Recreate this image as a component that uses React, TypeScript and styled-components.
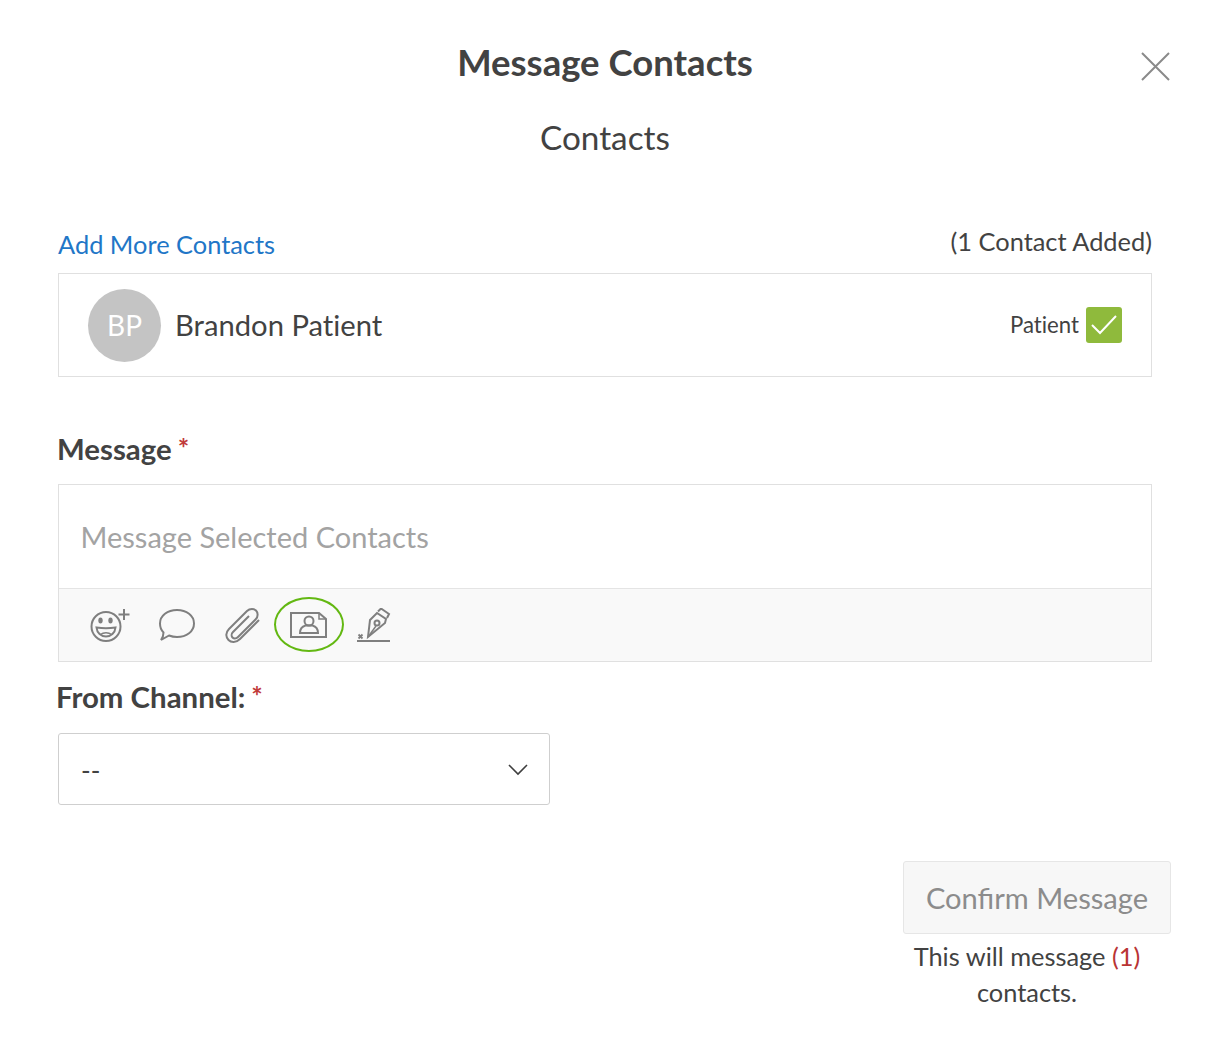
import styled, { createGlobalStyle } from "styled-components";

const GlobalStyle = createGlobalStyle`
  html, body {
    margin: 0;
    padding: 0;
    background: #fff;
  }
  body {
    font-family: Lato, "Open Sans", sans-serif;
    color: #424242;
  }
`;

const Modal = styled.div`
  position: relative;
  box-sizing: border-box;
  width: 1206px;
  height: 1052px;
  padding: 40px 54px 0 58px;
`;

const CloseButton = styled.button`
  position: absolute;
  top: 51px;
  left: 1140px;
  width: 31px;
  height: 31px;
  padding: 0;
  border: 0;
  background: none;
`;

const Title = styled.h1`
  margin: 0;
  font-size: 36.5px;
  line-height: 44px;
  font-weight: 700;
  text-align: center;
`;

const SubTitle = styled.h2`
  margin: 33px 0 0;
  font-size: 33.3px;
  line-height: 40px;
  font-weight: 400;
  text-align: center;
`;

const ContactsHead = styled.div`
  display: flex;
  justify-content: space-between;
  align-items: flex-start;
  margin-top: 69px;
  height: 47px;
`;

const AddLink = styled.a`
  font-size: 25.4px;
  line-height: 36px;
  color: #2176c7;
`;

const AddedCount = styled.span`
  font-size: 25.4px;
  line-height: 30px;
`;

const ContactRow = styled.div`
  display: flex;
  align-items: center;
  box-sizing: border-box;
  height: 104px;
  padding: 0 29px;
  border: 1px solid #e0e0e0;
`;

const Avatar = styled.div`
  display: flex;
  align-items: center;
  justify-content: center;
  width: 73px;
  height: 73px;
  border-radius: 50%;
  background: #c4c4c4;
  color: #fff;
  font-size: 28px;
`;

const ContactName = styled.span`
  margin-left: 14px;
  padding-bottom: 2px;
  font-size: 29.2px;
  font-variant-ligatures: none;
  flex: 1;
`;

const RoleLabel = styled.span`
  font-size: 22.2px;
  padding-bottom: 2px;
  font-variant-ligatures: none;
  margin-right: 7px;
`;

const CheckBox = styled.span`
  display: flex;
  align-items: center;
  justify-content: center;
  width: 36px;
  height: 36px;
  border-radius: 3px;
  background: #8fba3c;
`;

const FieldLabel = styled.label<{ $shift: number }>`
  display: block;
  font-size: 29.4px;
  line-height: 36px;
  font-weight: 700;
  margin-left: ${(p) => p.$shift}px;
`;

const Required = styled.span`
  color: #c13a3a;
  font-weight: 700;
  font-size: 27px;
  margin-left: 6px;
  vertical-align: 2px;
`;

const MessageSection = styled.div`
  margin-top: 53px;
`;

const MessageBox = styled.div`
  margin-top: 17px;
  border: 1px solid #e0e0e0;
`;

const MessageInput = styled.div`
  box-sizing: border-box;
  height: 103px;
  padding: 33px 22px 0 21.5px;
  font-size: 29px;
  line-height: 38px;
  color: #a3a3a3;
`;

const Toolbar = styled.div`
  display: flex;
  align-items: center;
  height: 72px;
  padding-left: 31px;
  background: #f9f9f9;
  border-top: 1px solid #e4e4e4;
`;

const ToolIcon = styled.svg<{ $gap?: number }>`
  display: block;
  flex: none;
  margin-left: ${(p) => p.$gap ?? 0}px;
  fill: none;
  stroke: #7f7f7f;
  stroke-width: 2;
`;

const HighlightRing = styled.span`
  display: flex;
  align-items: center;
  justify-content: center;
  flex: none;
  box-sizing: border-box;
  width: 70px;
  height: 55px;
  margin: -2px 0 0 13px;
  border: 2px solid #63b812;
  border-radius: 50%;
`;

const ChannelSection = styled.div`
  margin-top: 16px;
`;

const SelectBox = styled.div`
  display: flex;
  align-items: center;
  justify-content: space-between;
  box-sizing: border-box;
  width: 492px;
  height: 72px;
  margin-top: 18px;
  padding: 2px 21px 0 22px;
  border: 1px solid #cfcfcf;
  border-radius: 3px;
  font-size: 26px;
`;

const ConfirmArea = styled.div`
  display: flex;
  flex-direction: column;
  align-items: center;
  width: 268px;
  margin: 56px -19px 0 auto;
`;

const ConfirmButton = styled.button`
  box-sizing: border-box;
  width: 268px;
  height: 73px;
  padding: 0;
  border: 1px solid #e6e6e6;
  border-radius: 3px;
  background: #f7f7f7;
  color: #8c8c8c;
  font-family: inherit;
  font-size: 29.1px;
`;

const ConfirmNote = styled.p`
  margin: 4px 0 0 -20px;
  width: 260px;
  font-size: 25.4px;
  line-height: 36px;
  text-align: center;
`;

const Count = styled.span`
  color: #b93434;
`;

export default function App() {
  return (
    <Modal>
      <GlobalStyle />
      <CloseButton aria-label="Close">
        <svg width="31" height="31" viewBox="0 0 31 31" fill="none" stroke="#8a8a8a" strokeWidth="2">
          <path d="M2 2l27 27M29 2L2 29" />
        </svg>
      </CloseButton>

      <Title>Message Contacts</Title>
      <SubTitle>Contacts</SubTitle>

      <ContactsHead>
        <AddLink>Add More Contacts</AddLink>
        <AddedCount>(1 Contact Added)</AddedCount>
      </ContactsHead>

      <ContactRow>
        <Avatar>BP</Avatar>
        <ContactName>Brandon Patient</ContactName>
        <RoleLabel>Patient</RoleLabel>
        <CheckBox>
          <svg width="26" height="20" viewBox="0 0 26 20" fill="none" stroke="#fff" strokeWidth="2">
            <path d="M1 10l8 8L25 1" />
          </svg>
        </CheckBox>
      </ContactRow>

      <MessageSection>
        <FieldLabel $shift={-1}>
          Message<Required>*</Required>
        </FieldLabel>
        <MessageBox>
          <MessageInput>Message Selected Contacts</MessageInput>
          <Toolbar>
            {/* emoji */}
            <ToolIcon width="42" height="36" viewBox="0 0 42 36">
              <circle cx="16" cy="19.500" r="14.500" />
              <ellipse cx="10.500" cy="13.500" rx="2.200" ry="3" fill="#7f7f7f" stroke="none" />
              <ellipse cx="20.500" cy="13.500" rx="2.200" ry="3" fill="#7f7f7f" stroke="none" />
              <path d="M6.500 20.500c6 1 13 1 19 0-.5 5.500-4.500 9-9.500 9s-9-3.500-9.500-9z" />
              <path d="M10.500 27.500c3-2.500 8-2.500 11 0" strokeWidth="1.500" />
              <path d="M34 2v11M28.500 7.500h11" />
            </ToolIcon>
            {/* speech bubble */}
            <ToolIcon $gap={26} width="38" height="35" viewBox="0 0 38 35">
              <path d="M19 2c9.500 0 17 5.500 17 13.500S28.500 29 19 29c-3 0-5.500-.5-8-1.500L3 32c1.500-2 2.500-4.500 2.500-7.500C3 22 2 19 2 15.500 2 7.500 9.500 2 19 2z" />
            </ToolIcon>
            {/* paperclip */}
            <ToolIcon $gap={29} width="36" height="36" viewBox="0 0 36 36">
              <path d="M34 13L15 32c-4 4-9 3.500-11.500 1S0 26 4 22L22 4c3-3 7-2.500 9-.5s2.500 6-.5 9L13 30c-2 2-4.500 1.500-5.500.5s-1.500-3.500.5-5.500L24 9" />
            </ToolIcon>
            <HighlightRing>
              <ToolIcon $gap={-1} width="37" height="27" viewBox="0 0 37 27">
                <path d="M1 2h28l7 6v18H1z" />
                <path d="M29 2v6h7" strokeWidth="1.500" />
                <circle cx="19" cy="10" r="4.500" />
                <path d="M10 22c0-4 2-6.500 5.500-7.500h7c3.500 1 5.500 3.500 5.500 7.500z" />
              </ToolIcon>
            </HighlightRing>
            {/* signature pen */}
            <ToolIcon $gap={12} width="35" height="35" viewBox="0 0 35 35">
              <path d="M1 33h33" />
              <path d="M12 29l2-17 7-7 9 6-1 4z" />
              <path d="M22 3.500l3-3 8 5.500-2 4" />
              <path d="M12 29l8-11" strokeWidth="1.500" />
              <circle cx="21" cy="15" r="2.500" />
              <path d="M2.500 26.500l4 4M6.500 26.500l-4 4" strokeWidth="1.800" />
            </ToolIcon>
          </Toolbar>
        </MessageBox>
      </MessageSection>

      <ChannelSection>
        <FieldLabel $shift={-2}>
          From Channel:<Required>*</Required>
        </FieldLabel>
        <SelectBox>
          <span>--</span>
          <svg width="20" height="12" viewBox="0 0 20 12" fill="none" stroke="#3f3f3f" strokeWidth="1.600">
            <path d="M1 1l9 9 9-9" />
          </svg>
        </SelectBox>
      </ChannelSection>

      <ConfirmArea>
        <ConfirmButton disabled>Confirm Message</ConfirmButton>
        <ConfirmNote>
          This will message <Count>(1)</Count> contacts.
        </ConfirmNote>
      </ConfirmArea>
    </Modal>
  );
}
